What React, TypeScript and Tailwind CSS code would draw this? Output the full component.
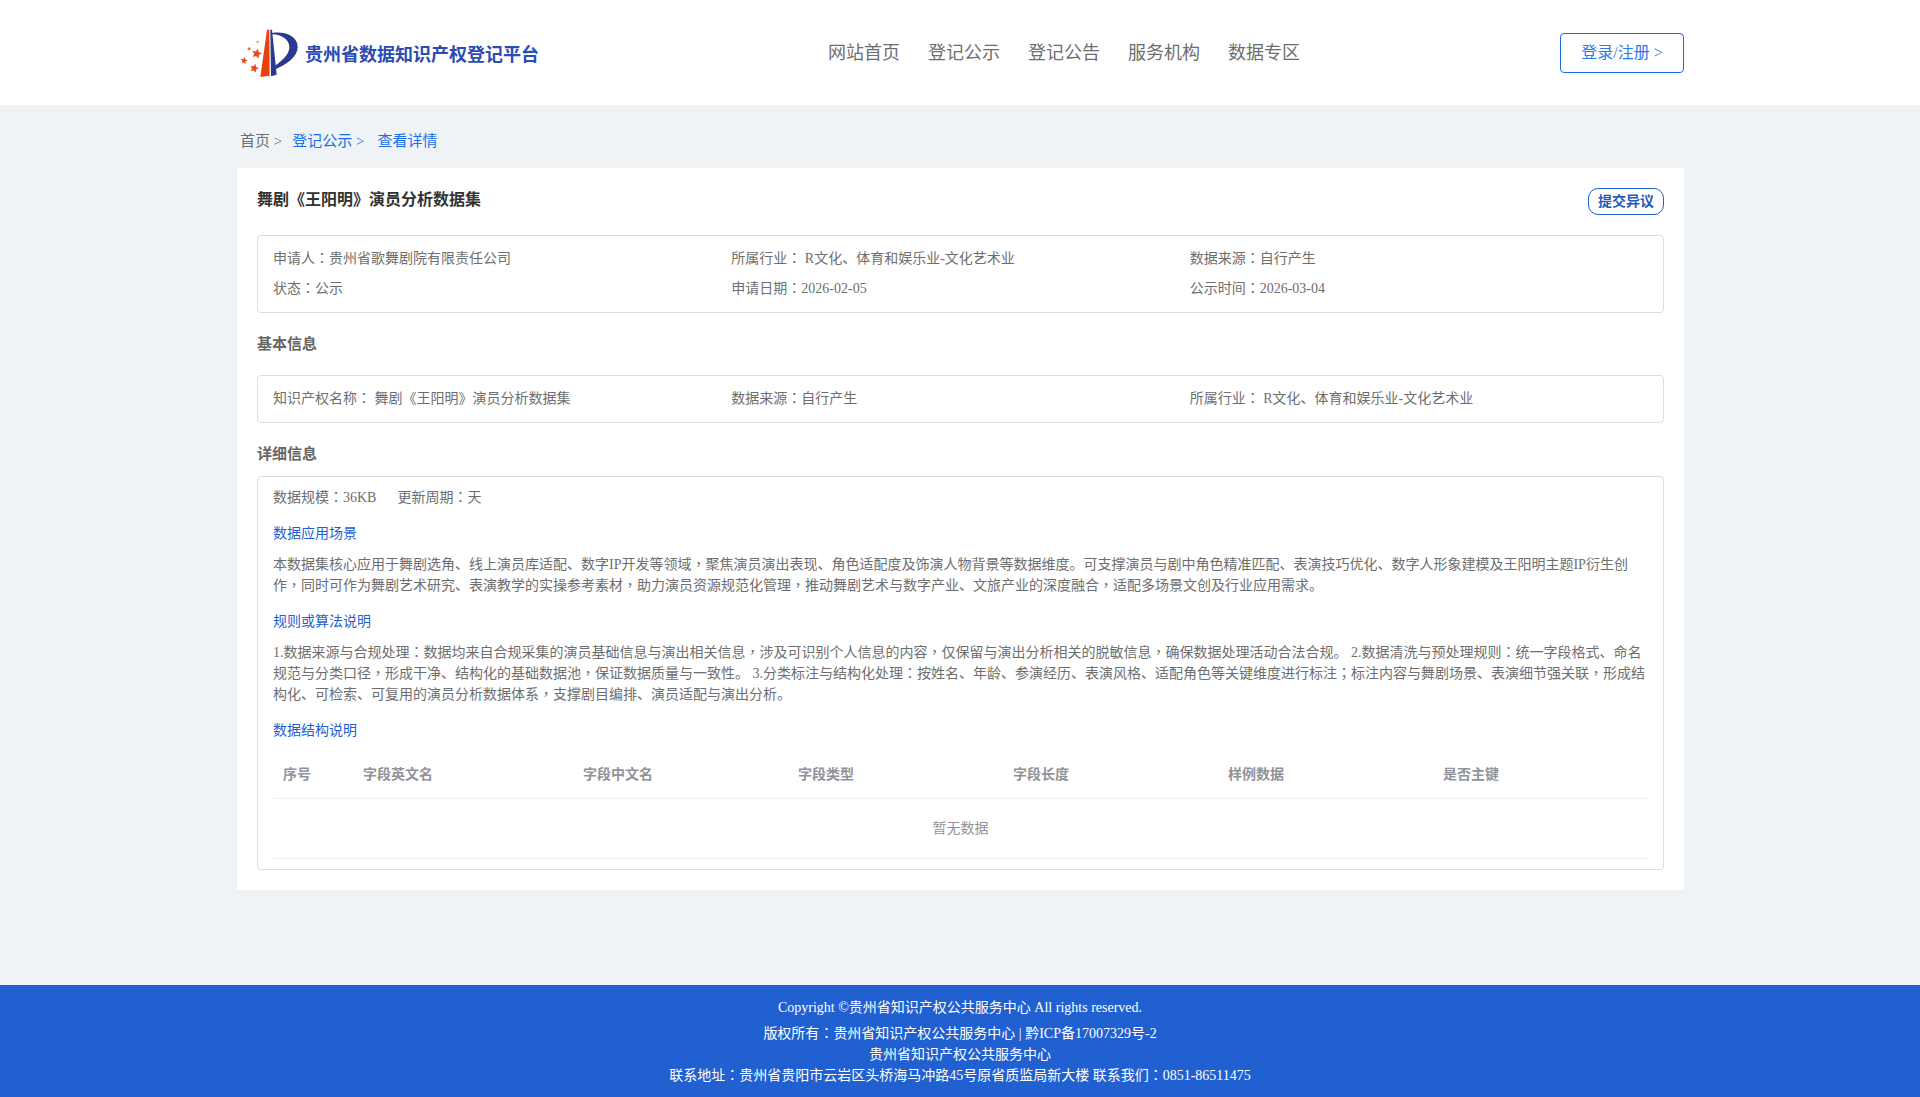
import React from "react";

const FONT = "[font-family:'Liberation_Serif','Noto_Sans_CJK_SC',serif]";

/* The reference's fallback font centres ，：； in their cell; the TC face of Noto does the same. */
function T({ children }: { children: string }) {
  const parts = children.split(/([，：；])/);
  return (
    <>
      {parts.map((p, i) =>
        p === "，" || p === "：" || p === "；" ? (
          <span key={i} className="[font-family:'Liberation_Serif','Noto_Sans_CJK_TC',serif]">{p}</span>
        ) : (
          <React.Fragment key={i}>{p}</React.Fragment>
        )
      )}
    </>
  );
}

function Star({ x, y, r }: { x: number; y: number; r: number }) {
  const pts: string[] = [];
  for (let i = 0; i < 10; i++) {
    const a = -Math.PI / 2 + 0.25 + (i * Math.PI) / 5;
    const rad = i % 2 === 0 ? r : r * 0.46;
    pts.push(`${(x + rad * Math.cos(a)).toFixed(1)},${(y + rad * Math.sin(a)).toFixed(1)}`);
  }
  return <polygon points={pts.join(" ")} fill="#e8491d" />;
}

function Logo() {
  return (
    <svg width="66" height="60" viewBox="0 0 198 180" className="shrink-0">
      <path d="M93 20 L100 20 L101 158 L73 162 Z" fill="#e8430f" />
      <path d="M103 20 L108 20 L122 155 L105 160 Z" fill="#2a3a8f" />
      <path
        d="M108 30 C152 24 185 42 185 72 C185 102 152 124 120 138 L117 128 C140 112 160 94 160 72 C160 50 138 35 108 34 Z"
        fill="#2a3a8f"
      />
      <Star x={62} y={92} r={16} />
      <Star x={24} y={113} r={11} />
      <Star x={55} y={136} r={14} />
      <circle cx={39} cy={77} r={4.5} fill="#e8693d" />
      <circle cx={65} cy={57} r={3.5} fill="#ee8a66" />
    </svg>
  );
}

function Nav({ children }: { children: React.ReactNode }) {
  return <a className="text-[18px] leading-[24px] text-[#6e6e6e] w-[100px]">{children}</a>;
}

function Cell({ children }: { children: string }) {
  return <div className="leading-[21px]"><T>{children}</T></div>;
}

function SubTitle({ children }: { children: React.ReactNode }) {
  return <div className="text-[14px] leading-[21px] text-[#1f5fce]">{children}</div>;
}

function Para({ lines }: { lines: string[] }) {
  return (
    <div className="mt-[10px]">
      {lines.map((l) => (
        <p key={l} className="leading-[21px] whitespace-nowrap"><T>{l}</T></p>
      ))}
    </div>
  );
}

const headers = ["序号", "字段英文名", "字段中文名", "字段类型", "字段长度", "样例数据", "是否主键"];

export default function App() {
  return (
    <div className={`${FONT} min-h-[1097px] bg-[#eff3f6] flex flex-col text-[14px]`}>
      <header className="h-[105px] bg-white">
        <div className="w-[1447px] ml-[237px] h-full flex items-center">
          <div className="flex items-center w-[592px] ml-[-1px]">
            <Logo />
            <span className="ml-[3px] mt-[6px] text-[18px] font-bold text-[#2b4bb5]">贵州省数据知识产权登记平台</span>
          </div>
          <nav className="flex flex-1">
            <Nav>网站首页</Nav>
            <Nav>登记公示</Nav>
            <Nav>登记公告</Nav>
            <Nav>服务机构</Nav>
            <Nav>数据专区</Nav>
          </nav>
          <button className="w-[124px] h-[40px] rounded-[4px] border border-[#1f6ae0] bg-white text-[16px] text-[#2a7ae8]">
            登录/注册 &gt;
          </button>
        </div>
      </header>

      <main className="w-[1447px] ml-[237px] flex-1">
        <div className="h-[63px] flex items-center pl-[3px] pt-[9px] text-[15px] text-[#6e6e6e]">
          <span>首页 &gt;</span>
          <span className="ml-[10px] text-[#1a6fe8]">登记公示 &gt;</span>
          <span className="ml-[13px] text-[#1a6fe8]">查看详情</span>
        </div>

        <section className="bg-white p-[20px] h-[722px]">
          <div className="flex justify-between items-start h-[47px]">
            <h1 className="text-[16px] font-bold text-[#333333] leading-[21px] mt-[1px]">舞剧《王阳明》演员分析数据集</h1>
            <button className="w-[76px] h-[27px] rounded-[10px] border border-[#1f60cf] text-[14px] font-bold text-[#1f5bbd]">
              提交异议
            </button>
          </div>

          <div className="h-[78px] border border-[#dddddd] rounded-[4px] px-[15px] pt-[12px] text-[#6e6e6e]">
            <div className="grid grid-cols-3 gap-y-[9px]">
              <Cell>申请人：贵州省歌舞剧院有限责任公司</Cell>
              <Cell>所属行业： R文化、体育和娱乐业-文化艺术业</Cell>
              <Cell>数据来源：自行产生</Cell>
              <Cell>状态：公示</Cell>
              <Cell>申请日期：2026-02-05</Cell>
              <Cell>公示时间：2026-03-04</Cell>
            </div>
          </div>

          <h2 className="mt-[21px] h-[41px] text-[15px] font-bold text-[#666666] leading-[21px]">基本信息</h2>

          <div className="h-[48px] border border-[#dddddd] rounded-[4px] px-[15px] pt-[12px] text-[#6e6e6e]">
            <div className="grid grid-cols-3">
              <Cell>知识产权名称： 舞剧《王阳明》演员分析数据集</Cell>
              <Cell>数据来源：自行产生</Cell>
              <Cell>所属行业： R文化、体育和娱乐业-文化艺术业</Cell>
            </div>
          </div>

          <h2 className="mt-[21px] h-[32px] text-[15px] font-bold text-[#666666] leading-[21px]">详细信息</h2>

          <div className="h-[394px] border border-[#dddddd] rounded-[4px] px-[15px] pt-[10px] text-[#6e6e6e]">
            <div className="flex leading-[21px]">
              <span><T>数据规模：36KB</T></span>
              <span className="ml-[21px]"><T>更新周期：天</T></span>
            </div>
            <div className="mt-[15px]"><SubTitle>数据应用场景</SubTitle></div>
            <Para
              lines={[
                "本数据集核心应用于舞剧选角、线上演员库适配、数字IP开发等领域，聚焦演员演出表现、角色适配度及饰演人物背景等数据维度。可支撑演员与剧中角色精准匹配、表演技巧优化、数字人形象建模及王阳明主题IP衍生创",
                "作，同时可作为舞剧艺术研究、表演教学的实操参考素材，助力演员资源规范化管理，推动舞剧艺术与数字产业、文旅产业的深度融合，适配多场景文创及行业应用需求。",
              ]}
            />
            <div className="mt-[15px]"><SubTitle>规则或算法说明</SubTitle></div>
            <Para
              lines={[
                "1.数据来源与合规处理：数据均来自合规采集的演员基础信息与演出相关信息，涉及可识别个人信息的内容，仅保留与演出分析相关的脱敏信息，确保数据处理活动合法合规。 2.数据清洗与预处理规则：统一字段格式、命名",
                "规范与分类口径，形成干净、结构化的基础数据池，保证数据质量与一致性。 3.分类标注与结构化处理：按姓名、年龄、参演经历、表演风格、适配角色等关键维度进行标注；标注内容与舞剧场景、表演细节强关联，形成结",
                "构化、可检索、可复用的演员分析数据体系，支撑剧目编排、演员适配与演出分析。",
              ]}
            />
            <div className="mt-[15px]"><SubTitle>数据结构说明</SubTitle></div>
            <div className="mt-[11px]">
              <div className="grid grid-cols-[80px_220px_215px_215px_215px_215px_1fr] h-[47px] items-center pb-[2px] border-b border-[#ebeef5] text-[#909399] font-bold">
                {headers.map((h) => (
                  <div key={h} className="pl-[10px]">{h}</div>
                ))}
              </div>
              <div className="h-[60px] flex items-center justify-center border-b border-[#ebeef5] text-[#909399]">暂无数据</div>
            </div>
          </div>
        </section>
      </main>

      <footer className="h-[112px] bg-[#2160d0] text-white text-center text-[14px] pt-[12px] mt-[95px]">
        <div className="leading-[21px]">Copyright ©贵州省知识产权公共服务中心 All rights reserved.</div>
        <div className="leading-[21px] mt-[5px]"><T>版权所有：贵州省知识产权公共服务中心 | 黔ICP备17007329号-2</T></div>
        <div className="leading-[21px]">贵州省知识产权公共服务中心</div>
        <div className="leading-[21px]"><T>联系地址：贵州省贵阳市云岩区头桥海马冲路45号原省质监局新大楼 联系我们：0851-86511475</T></div>
      </footer>
    </div>
  );
}
